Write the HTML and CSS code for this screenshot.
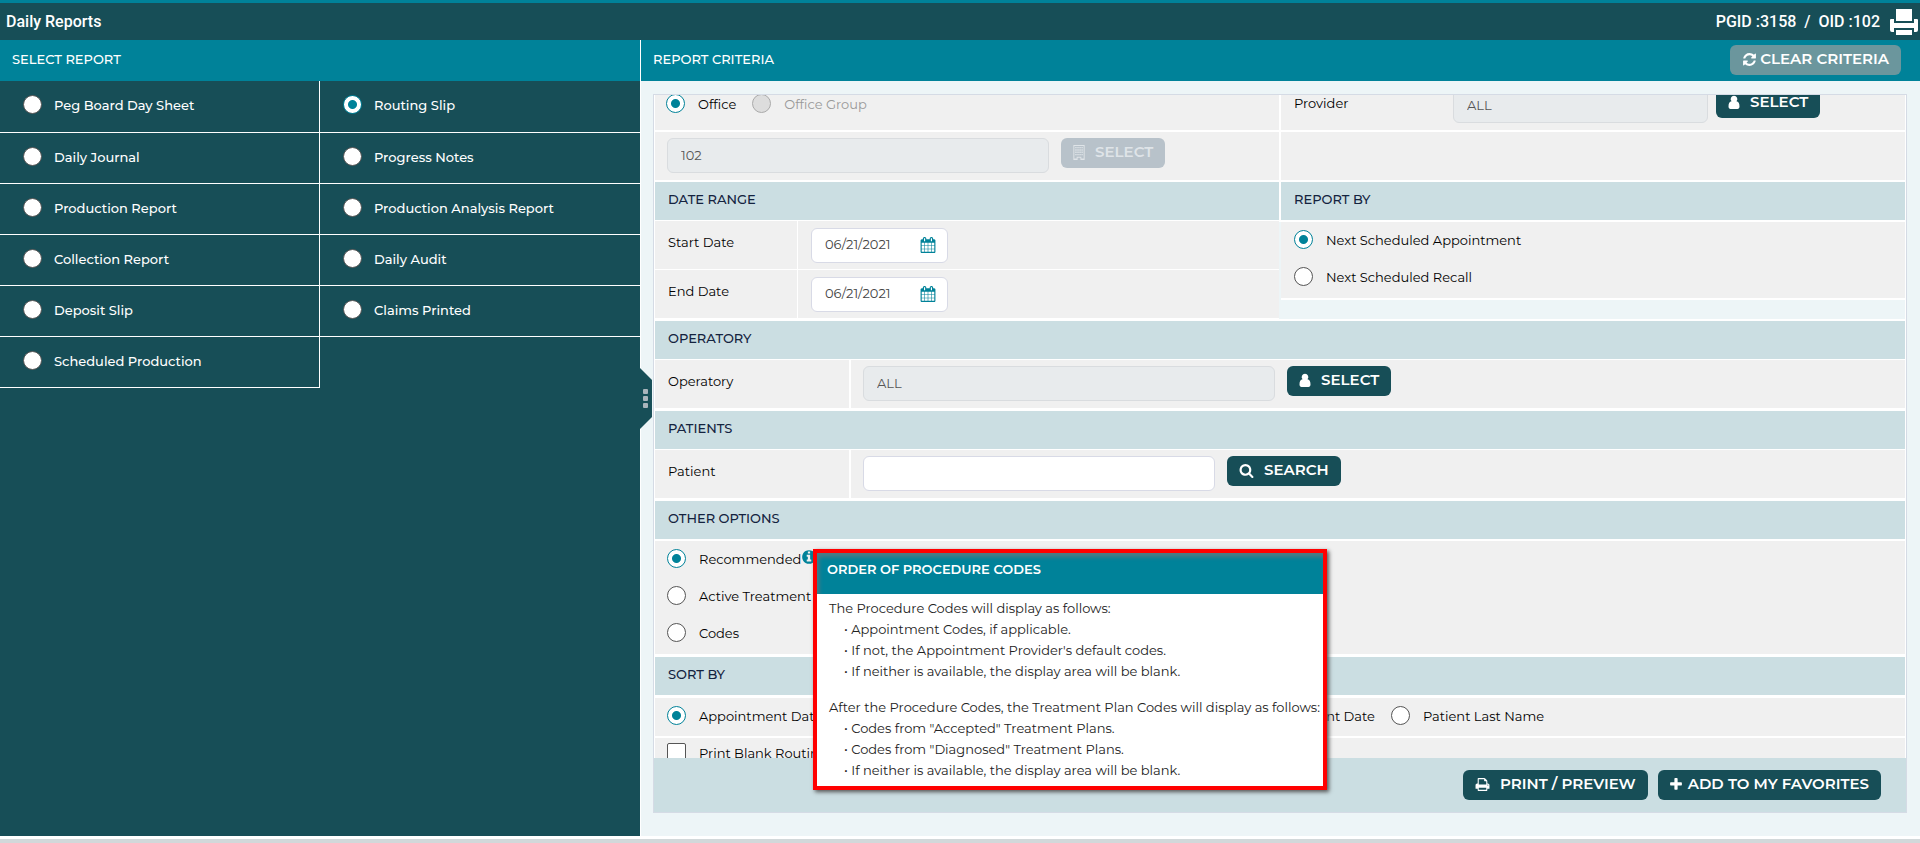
FILE: index.html
```
<!DOCTYPE html>
<html lang="en">
<head>
<meta charset="utf-8">
<title>Daily Reports</title>
<link rel="stylesheet" href="styles.css">
</head>
<body>
<svg class="sprite" aria-hidden="true">
  <symbol id="i-refresh" viewBox="0 0 1792 1792"><path d="M1639 1056q0 5-1 7-64 268-268 434.5t-478 166.5q-146 0-282.5-55t-243.5-157l-129 129q-19 19-45 19t-45-19-19-45v-448q0-26 19-45t45-19h448q26 0 45 19t19 45-19 45l-137 137q71 66 161 102t187 36q134 0 250-65t186-179q11-17 53-117 8-23 30-23h192q13 0 22.5 9.5t9.5 22.5zm25-800v448q0 26-19 45t-45 19h-448q-26 0-45-19t-19-45 19-45l138-138q-148-137-349-137-134 0-250 65t-186 179q-11 17-53 117-8 23-30 23h-199q-13 0-22.5-9.5t-9.5-22.5v-7q65-268 270-434.5t480-166.5q146 0 284 55.5t245 156.5l130-129q19-19 45-19t45 19 19 45z"/></symbol>
  <symbol id="i-search" viewBox="0 0 1792 1792"><path d="M1216 832q0-185-131.500-316.500t-316.500-131.500-316.500 131.500-131.500 316.500 131.500 316.500 316.500 131.500 316.500-131.500 131.500-316.500zm512 832q0 52-38 90t-90 38q-54 0-90-38l-343-342q-179 124-399 124-143 0-273.500-55.500t-225-150-150-225-55.500-273.500 55.500-273.500 150-225 225-150 273.500-55.500 273.500 55.500 225 150 150 225 55.500 273.500q0 220-124 399l343 343q37 37 37 90z"/></symbol>
  <symbol id="i-plus" viewBox="192 0 1408 1792"><path d="M1600 736v192q0 40-28 68t-68 28h-416v416q0 40-28 68t-68 28h-192q-40 0-68-28t-28-68v-416h-416q-40 0-68-28t-28-68v-192q0-40 28-68t68-28h416v-416q0-40 28-68t68-28h192q40 0 68 28t28 68v416h416q40 0 68 28t28 68z"/></symbol>
  <symbol id="i-print" viewBox="0 0 1792 1792"><path d="M448 1536h896v-256h-896v256zm0-640h896v-384h-160q-40 0-68-28t-28-68v-160h-640v640zm1152 64q0-26-19-45t-45-19-45 19-19 45 19 45 45 19 45-19 19-45zm128 0v416q0 13-9.500 22.500t-22.500 9.500h-224v160q0 40-28 68t-68 28h-960q-40 0-68-28t-28-68v-160h-224q-13 0-22.500-9.500t-9.500-22.500v-416q0-79 56.500-135.500t135.500-56.500h64v-544q0-40 28-68t68-28h672q40 0 88 20t76 48l152 152q28 28 48 76t20 88v256h64q79 0 135.500 56.500t56.500 135.500z"/></symbol>
  <symbol id="i-info" viewBox="0 0 1792 1792"><path d="M1152 1376v-160q0-14-9-23t-23-9h-96v-512q0-14-9-23t-23-9h-320q-14 0-23 9t-9 23v160q0 14 9 23t23 9h96v320h-96q-14 0-23 9t-9 23v160q0 14 9 23t23 9h448q14 0 23-9t9-23zm-128-896v-160q0-14-9-23t-23-9h-192q-14 0-23 9t-9 23v160q0 14 9 23t23 9h192q14 0 23-9t9-23zm640 416q0 209-103 385.500t-279.500 279.500-385.500 103-385.500-103-279.500-279.500-103-385.500 103-385.500 279.500-279.500 385.500-103 385.500 103 279.500 279.500 103 385.500z"/></symbol>
  <symbol id="i-calendar" viewBox="0 0 1792 1792"><path d="M192 1664h288v-288h-288v288zm352 0h320v-288h-320v288zm-352-352h288v-320h-288v320zm352 0h320v-320h-320v320zm-352-384h288v-288h-288v288zm736 736h320v-288h-320v288zm-384-736h320v-288h-320v288zm768 736h288v-288h-288v288zm-384-352h320v-320h-320v320zm-352-864v-288q0-13-9.500-22.500t-22.500-9.500h-64q-13 0-22.500 9.500t-9.500 22.500v288q0 13 9.500 22.500t22.500 9.500h64q13 0 22.500-9.500t9.500-22.500zm736 864h288v-320h-288v320zm-384-384h320v-288h-320v288zm384 0h288v-288h-288v288zm32-480v-288q0-13-9.500-22.500t-22.500-9.500h-64q-13 0-22.500 9.500t-9.500 22.500v288q0 13 9.500 22.500t22.500 9.500h64q13 0 22.500-9.500t9.500-22.500zm384-64v1280q0 52-38 90t-90 38h-1408q-52 0-90-38t-38-90v-1280q0-52 38-90t90-38h128v-96q0-66 47-113t113-47h64q66 0 113 47t47 113v96h384v-96q0-66 47-113t113-47h64q66 0 113 47t47 113v96h128q52 0 90 38t38 90z"/></symbol>
  <symbol id="i-user" viewBox="0 0 12 15"><path d="M6 .8a3.300 3.300 0 0 1 2.500 5.500c1.900.4 3 2 3 5.200 0 1.500-.8 2.500-2 2.500h-7c-1.200 0-2-1-2-2.500 0-3.200 1.100-4.800 3-5.200A3.300 3.300 0 0 1 6 .8z"/></symbol>
  <symbol id="i-building" viewBox="0 0 12 16"><path fill-rule="evenodd" d="M0 0h12v16H7.500v-2.500h-3V16H0zM1 1v13.500h2.500v-2h5v2H11V1zM2 2h1.500v1.500H2zm2.200 0h1.500v1.500H4.200zm2.200 0h1.500v1.500H6.400zm2.200 0H10v1.500H8.600zM2 4.500h1.500V6H2zm2.200 0h1.500V6H4.200zm2.200 0h1.500V6H6.400zm2.200 0H10V6H8.600zM2 7h1.500v1.500H2zm2.200 0h1.500v1.500H4.200zm2.200 0h1.500v1.500H6.400zm2.200 0H10v1.500H8.600zM2 9.500h1.500V11H2zm2.200 0h1.500V11H4.200zm2.200 0h1.500V11H6.400zm2.200 0H10V11H8.600z"/></symbol>
  <symbol id="i-printer" viewBox="0 0 28 26"><path d="M6 0h16v12H6zM0 11q0-1 1-1h3v4h20v-4h3q1 0 1 1v10q0 2-2 2h-2v-4H4v4H2q-2 0-2-2zM6 21h16v5H6z"/></symbol>
</svg>

<header class="topbar">
  <h1 class="topbar-title">Daily Reports</h1>
  <div class="topbar-ids">
    <span>PGID :3158 &nbsp;/&nbsp; OID :102</span>
    <button class="icon-button" type="button" aria-label="Print"><svg class="printer-icon"><use href="#i-printer"/></svg></button>
  </div>
</header>

<main class="workspace">
  <section class="reports">
    <h2 class="panel-title">SELECT REPORT</h2>
    <div class="report-grid">
      <label class="report"><input class="radio" type="radio" name="report"><span>Peg Board Day Sheet</span></label>
      <label class="report"><input class="radio" type="radio" name="report" checked><span>Routing Slip</span></label>
      <label class="report"><input class="radio" type="radio" name="report"><span>Daily Journal</span></label>
      <label class="report"><input class="radio" type="radio" name="report"><span>Progress Notes</span></label>
      <label class="report"><input class="radio" type="radio" name="report"><span>Production Report</span></label>
      <label class="report"><input class="radio" type="radio" name="report"><span>Production Analysis Report</span></label>
      <label class="report"><input class="radio" type="radio" name="report"><span>Collection Report</span></label>
      <label class="report"><input class="radio" type="radio" name="report"><span>Daily Audit</span></label>
      <label class="report"><input class="radio" type="radio" name="report"><span>Deposit Slip</span></label>
      <label class="report"><input class="radio" type="radio" name="report"><span>Claims Printed</span></label>
      <label class="report"><input class="radio" type="radio" name="report"><span>Scheduled Production</span></label>
    </div>
  </section>

  <section class="criteria">
    <div class="criteria-head">
      <h2 class="panel-title">REPORT CRITERIA</h2>
      <button class="button button-clear" type="button"><svg class="icon"><use href="#i-refresh"/></svg>CLEAR CRITERIA</button>
    </div>
    <button class="collapse" type="button" aria-label="Collapse panel"><i></i><i></i><i></i></button>

    <form class="criteria-box">
      <div class="scroll">
        <div class="rows">
          <div class="split">
            <div class="stack">
              <div class="cell cell-choices">
                <label class="choice"><input class="radio" type="radio" name="scope" checked><span>Office</span></label>
                <label class="choice"><input class="radio" type="radio" name="scope" disabled><span>Office Group</span></label>
              </div>
              <div class="cell cell-field">
                <input class="field field-office" type="text" value="102" aria-label="Office" disabled>
                <button class="button button-off" type="button" disabled><svg class="icon icon-narrow"><use href="#i-building"/></svg>&nbsp;SELECT</button>
              </div>
              <h3 class="section">DATE RANGE</h3>
            </div>
            <div class="stack">
              <div class="cell cell-field cell-provider">
                <label class="provider-label" for="provider">Provider</label>
                <input class="field field-provider" id="provider" type="text" value="ALL" disabled>
                <button class="button" type="button"><svg class="icon icon-narrow"><use href="#i-user"/></svg>&nbsp;SELECT</button>
              </div>
              <div class="cell"></div>
              <h3 class="section">REPORT BY</h3>
            </div>
          </div>

          <div class="split split-dates">
            <div class="dates">
              <div class="cell"><label class="label" for="start">Start Date</label></div>
              <div class="cell cell-field"><span class="date"><input class="field field-date" id="start" type="text" value="06/21/2021"><svg class="icon-date"><use href="#i-calendar"/></svg></span></div>
              <div class="cell"><label class="label" for="end">End Date</label></div>
              <div class="cell cell-field"><span class="date"><input class="field field-date" id="end" type="text" value="06/21/2021"><svg class="icon-date"><use href="#i-calendar"/></svg></span></div>
            </div>
            <div class="report-by">
              <label class="choice"><input class="radio" type="radio" name="by" checked><span>Next Scheduled Appointment</span></label>
              <label class="choice"><input class="radio" type="radio" name="by"><span>Next Scheduled Recall</span></label>
            </div>
          </div>

          <h3 class="section">OPERATORY</h3>
          <div class="pair">
            <div class="cell"><label class="label" for="operatory">Operatory</label></div>
            <div class="cell cell-field">
              <input class="field field-operatory" id="operatory" type="text" value="ALL" disabled>
              <button class="button" type="button"><svg class="icon icon-narrow"><use href="#i-user"/></svg>&nbsp;SELECT</button>
            </div>
          </div>

          <h3 class="section">PATIENTS</h3>
          <div class="pair">
            <div class="cell"><label class="label" for="patient">Patient</label></div>
            <div class="cell cell-field">
              <input class="field field-patient" id="patient" type="text">
              <button class="button" type="button"><svg class="icon"><use href="#i-search"/></svg>&nbsp;SEARCH</button>
            </div>
          </div>

          <h3 class="section">OTHER OPTIONS</h3>
          <div class="options">
            <div class="option-list">
              <label class="choice"><input class="radio" type="radio" name="plan" checked><span>Recommended</span><svg class="icon-info"><use href="#i-info"/></svg></label>
              <label class="choice"><input class="radio" type="radio" name="plan"><span>Active Treatment Plan</span></label>
              <label class="choice"><input class="radio" type="radio" name="plan"><span>Codes</span></label>
            </div>
            <input class="check" type="checkbox" aria-label="Option">
          </div>

          <h3 class="section">SORT BY</h3>
          <div class="sort">
            <label class="choice sort-first"><input class="radio" type="radio" name="sort" checked><span>Appointment Date</span></label>
            <label class="choice"><input class="radio" type="radio" name="sort"><span>Next Appointment Date</span></label>
            <label class="choice"><input class="radio" type="radio" name="sort"><span>Patient Last Name</span></label>
          </div>
          <div class="blank">
            <label class="choice"><input class="check" type="checkbox"><span>Print Blank Routing Slip</span></label>
          </div>
        </div>
      </div>
      <div class="actions">
        <button class="button" type="button"><svg class="icon"><use href="#i-print"/></svg>&nbsp;PRINT / PREVIEW</button>
        <button class="button" type="button"><svg class="icon icon-narrow"><use href="#i-plus"/></svg>ADD TO MY FAVORITES</button>
      </div>
    </form>

    <aside class="tip" role="tooltip">
      <h3 class="tip-title">ORDER OF PROCEDURE CODES</h3>
      <div class="tip-body">
        <p>The Procedure Codes will display as follows:</p>
        <ul>
          <li>Appointment Codes, if applicable.</li>
          <li>If not, the Appointment Provider's default codes.</li>
          <li>If neither is available, the display area will be blank.</li>
        </ul>
        <p>After the Procedure Codes, the Treatment Plan Codes will display as follows:</p>
        <ul>
          <li>Codes from "Accepted" Treatment Plans.</li>
          <li>Codes from "Diagnosed" Treatment Plans.</li>
          <li>If neither is available, the display area will be blank.</li>
        </ul>
      </div>
    </aside>
  </section>
</main>
<footer class="bottom-bar"></footer>
</body>
</html>
```
FILE: styles.css
```
:root {
  --teal: #008299;
  --dark: #174e57;
  --mist: #edf5f7;
  --band: #cbdee2;
  --cell: #f0f0f0;
}
* { box-sizing: border-box; }
body {
  margin: 0;
  height: 100vh;
  display: flex;
  flex-direction: column;
  overflow: hidden;
  background: #fff;
  color: #000;
  font: 13px/20px Montserrat, Inter, sans-serif;
}
h1, h2, h3, p, ul { margin: 0; padding: 0; }
button, input { font: inherit; }
.sprite { display: none; }
svg { fill: currentColor; }

.topbar {
  display: flex;
  align-items: center;
  justify-content: space-between;
  height: 40px;
  padding: 0 2px 0 6px;
  border-top: 3px solid var(--teal);
  background: var(--dark);
  color: #fff;
  font-family: Roboto, sans-serif;
  font-size: 16px;
  font-weight: 500;
}
.topbar-title { font-size: 16px; font-weight: 500; }
.topbar-ids { display: flex; align-items: center; gap: 10px; }
.icon-button { display: flex; padding: 0; border: 0; background: none; color: #fff; }
.printer-icon { width: 28px; height: 26px; }

.workspace { flex: 1; min-height: 0; display: flex; }
.reports { width: 33.333%; background: var(--dark); color: #fff; }
.panel-title {
  padding: 9px 12px 12px;
  background: var(--teal);
  color: #fff;
  font-size: 13px;
  line-height: 20px;
  font-weight: 500;
}
.report-grid {
  display: grid;
  grid-template-columns: 1fr 1fr;
  grid-template-rows: 52px;
  grid-auto-rows: 51px;
  font-weight: 500;
}
.report {
  display: flex;
  gap: 12px;
  padding: 14px 0 0 23px;
  border-bottom: 1px solid #fff;
}
.report:nth-child(odd) { border-right: 1px solid #fff; }

.radio, .check {
  flex: none;
  appearance: none;
  width: 19px;
  height: 19px;
  margin: 0;
  border: 1px solid #555;
  border-radius: 50%;
  background: #fff;
}
.check { border-radius: 2px; }
.radio:checked {
  border-color: var(--teal);
  background: radial-gradient(circle, var(--teal) 4px, #fff 5px);
}
.radio:disabled { border-color: #aaa; background: #ddd; }
.radio:disabled + span { color: #999; }

.criteria {
  position: relative;
  flex: 1;
  min-width: 0;
  display: flex;
  flex-direction: column;
  border-left: 1px solid #fff;
  background: var(--mist);
}
.criteria-head {
  display: flex;
  align-items: flex-start;
  justify-content: space-between;
  height: 41px;
  padding: 0 19px 0 0;
  background: var(--teal);
}
.button {
  flex: none;
  display: flex;
  align-items: center;
  gap: 6px;
  height: 30px;
  padding: 0 12px 2px;
  border: 0;
  border-radius: 6px;
  background: var(--dark);
  color: #fff;
  font-size: 15px;
  font-weight: 600;
}
.button-clear { gap: 3px; margin-top: 5px; background: #6b969d; }
.button-off { background: #b8c2ca; color: #dfe4e8; }
.icon { width: 15px; height: 15px; }
.icon-narrow { width: 12px; }

.collapse {
  position: absolute;
  left: -1px;
  top: 328px;
  width: 12px;
  height: 61px;
  display: flex;
  flex-direction: column;
  align-items: center;
  justify-content: center;
  gap: 2px;
  padding: 0;
  border: 0;
  background: var(--dark);
  clip-path: polygon(0 0, 100% 12px, 100% 49px, 0 100%);
}
.collapse i { width: 5px; height: 5px; border-radius: 1px; background: #a9b4bb; }

.criteria-box {
  flex: 1;
  min-height: 0;
  display: flex;
  flex-direction: column;
  margin: 13px 13px 23px 12px;
  border: 1px solid #d5dbe5;
}
.scroll { flex: 1; min-height: 0; overflow: hidden; }
/* The list is scrolled a little past its first row. */
.rows { margin-top: -13px; padding: 0 1px; background: #fff; }
.split { display: grid; grid-template-columns: 1fr 1fr; gap: 2px; }
.stack { display: grid; grid-template-rows: 48px 48px 38px; gap: 2px; }
.cell { background: var(--cell); }
.cell-choices { display: flex; gap: 16px; padding: 12px 11px; }
.cell-field { display: flex; gap: 12px; padding: 6px 12px; }
.cell-provider { padding-left: 13px; gap: 8px; }
.section {
  height: 38px;
  padding: 7px 13px;
  background: var(--band);
  color: #14233f;
  font-size: 13px;
  font-weight: 500;
}
.choice { display: flex; gap: 13px; }
.field {
  height: 35px;
  padding: 0 13px 2px;
  border: 1px solid #d8dae6;
  border-radius: 6px;
  background: #fff;
  color: #444;
}
.field:disabled { border-color: #d9dcdf; background: #e8ebed; color: #555; }
.field-office { width: 382px; }
.provider-label { width: 151px; padding-top: 5px; }
.field-provider { width: 255px; }
.split-dates { padding-top: 1px; background: var(--mist); box-shadow: inset 0 2px #fff; }
.dates { display: grid; grid-template-columns: 142px 1fr; gap: 1px; padding-bottom: 1px; background: #fff; }
.dates .cell { height: 48px; }
.dates .cell-field { padding-left: 13px; }
.label { display: block; padding: 11px 13px; }
.date { display: flex; align-items: center; }
.field-date { width: 137px; }
.icon-date { width: 16px; height: 16px; margin-left: -28px; color: var(--teal); }
.report-by {
  align-self: start;
  display: grid;
  gap: 17px;
  padding: 8px 13px 11px;
  margin-top: 1px;
  border-bottom: 2px solid #fff;
  background: var(--cell);
}
.split-dates + .section { margin-top: 2px; }
.pair { display: grid; grid-template-columns: 194px 1fr; gap: 2px; padding: 1px 0 3px; }
.pair .cell { height: 48px; }
.field-operatory { width: 412px; }
.field-patient { width: 352px; }
.options {
  display: flex;
  height: 113px;
  margin: 2px 0 3px;
  padding: 8px 12px;
  background: var(--cell);
}
.option-list { display: grid; align-content: start; gap: 17px; width: 418px; }
.icon-info { width: 16px; height: 16px; margin-left: -13px; color: var(--teal); }
.sort { display: flex; gap: 16px; height: 38px; margin: 3px 0 2px; padding: 8px 12px; background: var(--cell); }
.sort-first { width: 503px; }
.blank { height: 38px; padding: 5px 12px; background: var(--cell); }

.actions {
  display: flex;
  justify-content: flex-end;
  gap: 10px;
  height: 54px;
  padding: 12px 25px 0 0;
  background: var(--band);
}

.tip {
  position: absolute;
  left: 172px;
  top: 509px;
  width: 514px;
  border: 4px solid #f00;
  background: #fff;
  box-shadow: 2px 2px 4px #555;
  color: #222;
}
.tip-title {
  height: 41px;
  padding: 6px 10px;
  background: var(--teal);
  box-shadow: inset 2px 4px 4px #4f7a84;
  color: #fff;
  font-size: 13px;
  font-weight: 600;
}
.tip-body { padding: 4px 0 5px 12px; line-height: 21px; white-space: nowrap; }
.tip-body ul { list-style: none; padding-left: 15px; }
.tip-body ul + p { margin-top: 15px; }
.tip-body li::before { content: "• "; }

.bottom-bar { height: 7px; border-top: 3px solid #fff; background: #d2d8da; }
```
